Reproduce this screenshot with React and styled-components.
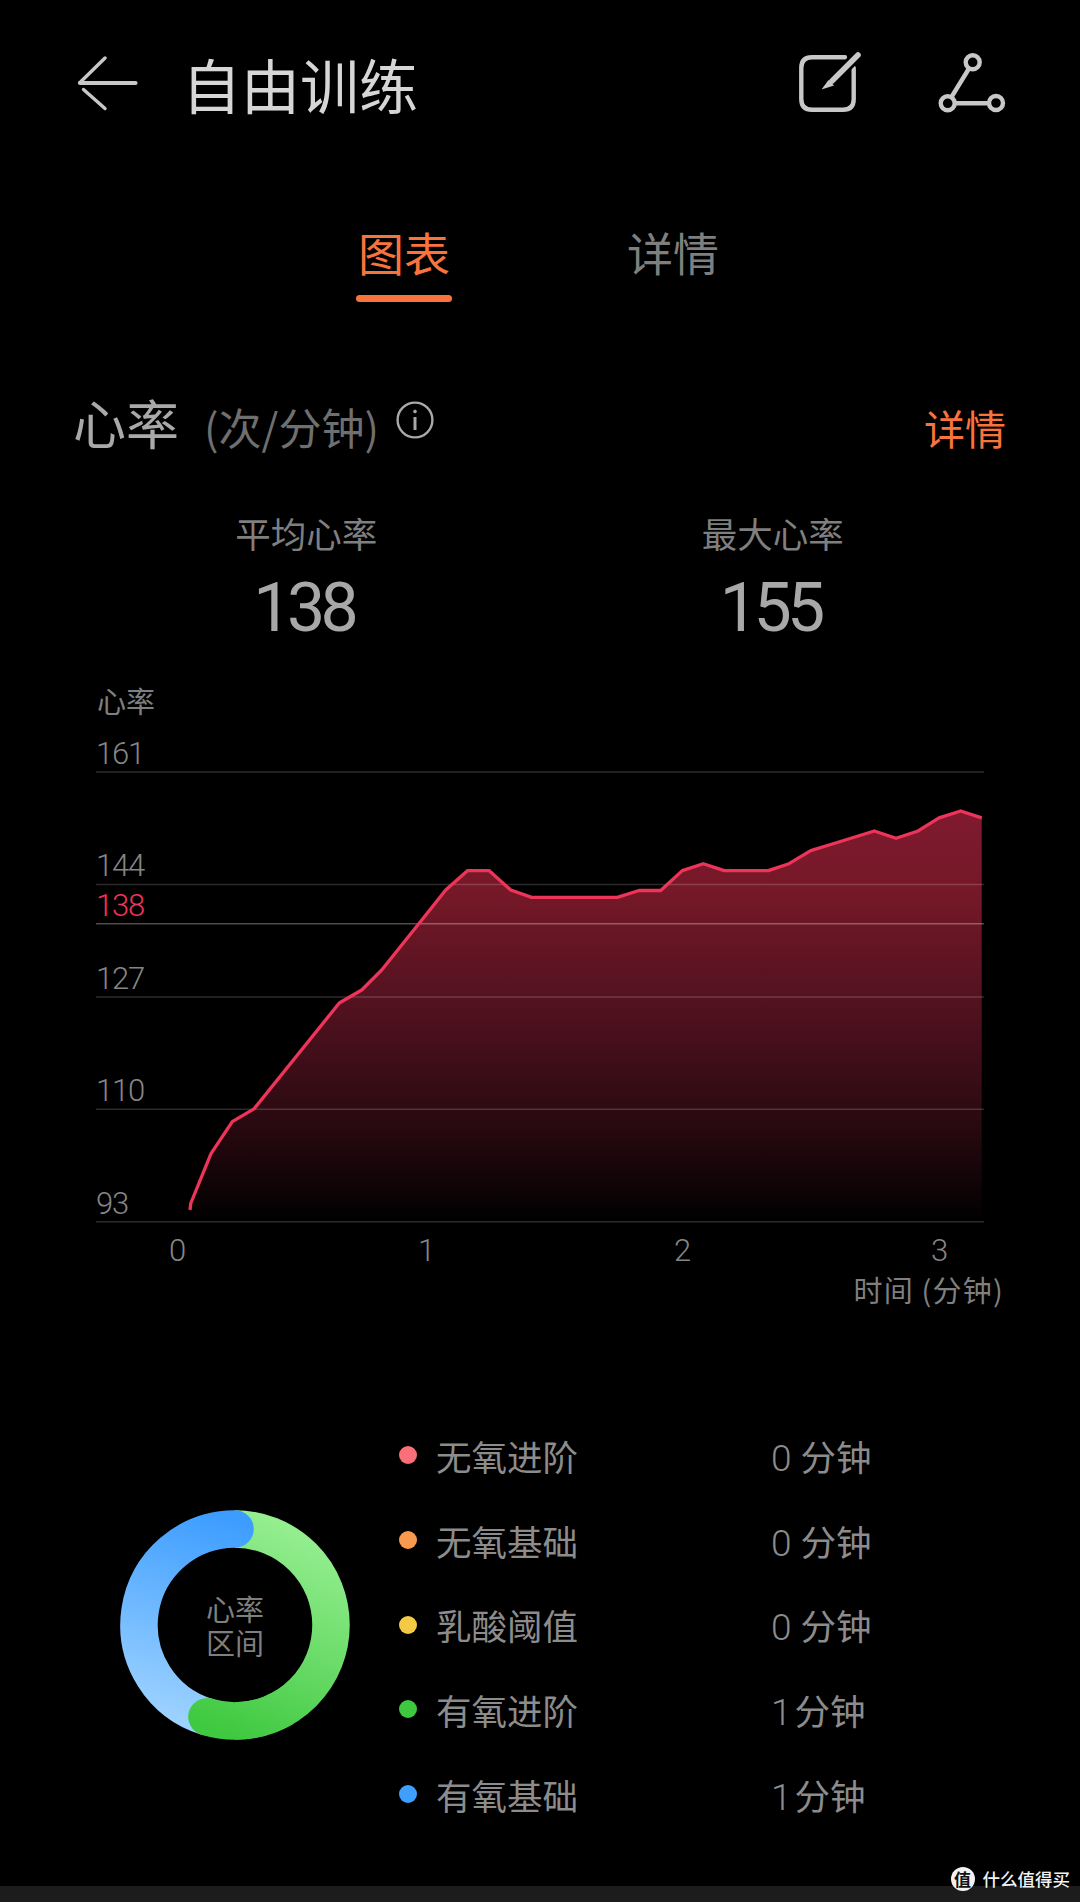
import React from "react";
import styled, { createGlobalStyle } from "styled-components";

const CJK = `"Noto Sans CJK SC", "Noto Sans", sans-serif`;
const NUM = `Roboto, "Noto Sans CJK SC", sans-serif`;

const GlobalStyle = createGlobalStyle`
  html, body {
    margin: 0;
    background: #000;
  }
  * {
    box-sizing: border-box;
  }
`;

const gridLines = [
  { y: 772, label: "161" },
  { y: 884.4, label: "144" },
  { y: 923.8, label: "138", accent: true },
  { y: 996.9, label: "127" },
  { y: 1109.3, label: "110" },
  { y: 1221.7, label: "93" },
];

const xTicks = [
  { x: 177, label: "0" },
  { x: 426, label: "1" },
  { x: 682, label: "2" },
  { x: 939, label: "3" },
];

const heartPoints = [
  [190, 1210], [190.7, 1203.5], [211, 1153.6], [232.3, 1121.6], [254, 1108.9],
  [339.3, 1003], [361.7, 990], [381.7, 970], [425, 916], [445.7, 890],
  [467.7, 870.6], [489, 870.6], [510.7, 890], [531.7, 897.4], [617.3, 897.4],
  [639, 890.5], [660.7, 890.5], [682.3, 870.6], [703.3, 863.7], [724.3, 870.6],
  [768.3, 870.6], [789, 863.7], [810.7, 850.6], [832.3, 844], [853.3, 837.5],
  [874.3, 831], [896, 838.2], [917.3, 831.3], [939, 817.9], [960.7, 811],
  [981.7, 817.9],
];

const zones = [
  { name: "无氧进阶", value: "0", color: "#fb6f78" },
  { name: "无氧基础", value: "0", color: "#f9994d" },
  { name: "乳酸阈值", value: "0", color: "#f4c944" },
  { name: "有氧进阶", value: "1", color: "#3ec83f" },
  { name: "有氧基础", value: "1", color: "#3f9fff" },
];

const linePath = heartPoints.map(([x, y]) => `${x},${y}`).join(" ");
const areaPath = `190,1221 ${linePath} 981.7,1221`;

const polar = (deg) => {
  const a = (deg * Math.PI) / 180;
  return `${115 + 96 * Math.sin(a)} ${115 - 96 * Math.cos(a)}`;
};
const arc = (from, to) => {
  const large = to - from > 180 ? 1 : 0;
  return `M${polar(from)} A96 96 0 ${large} 1 ${polar(to)}`;
};

function BackIcon() {
  return (
    <svg width="62" height="56" viewBox="0 0 62 56" fill="none" stroke="#c8c8c8" strokeLinecap="round">
      <path d="M28 2 L3 26.5" strokeWidth="3.4" />
      <path d="M6.5 33.5 L28 52.5" strokeWidth="3.4" />
      <path d="M3 27 H58.5" strokeWidth="4.2" />
    </svg>
  );
}

function EditIcon() {
  return (
    <svg width="66" height="64" viewBox="0 0 66 64" fill="none">
      <path
        d="M47 5.3 H14 Q3.3 5.3 3.3 16 V47 Q3.3 57.8 14 57.8 H45 Q55.7 57.8 55.7 47 V16"
        stroke="#c8c8c8"
        strokeWidth="4.4"
        strokeLinecap="round"
      />
      <path d="M60 3 L34 29" stroke="#000" strokeWidth="11" />
      <path d="M60 3 L34 29" stroke="#c8c8c8" strokeWidth="5.6" strokeLinecap="round" />
      <path d="M30.5 28 L36 33.5 L23.5 37.5 Z" fill="#c8c8c8" />
    </svg>
  );
}

function ShareIcon() {
  return (
    <svg width="68" height="62" viewBox="0 0 68 62" fill="none" stroke="#c8c8c8" strokeWidth="4.4">
      <circle cx="34.7" cy="9.3" r="7" />
      <circle cx="9.7" cy="50.3" r="7" />
      <circle cx="58" cy="50" r="7" />
      <path d="M31 15.5 L13.5 44 M16.7 50.2 H51" />
    </svg>
  );
}

function InfoIcon() {
  return (
    <svg width="38" height="38" viewBox="0 0 38 38" fill="none" stroke="#a8a8a8">
      <circle cx="19" cy="19" r="17.4" strokeWidth="2.4" />
      <path d="M19 16 V29" strokeWidth="3" />
      <circle cx="19" cy="10.5" r="1.4" fill="#a8a8a8" strokeWidth="1" />
    </svg>
  );
}

function HeartChart() {
  return (
    <ChartSvg viewBox="73 680 934 640">
      <defs>
        <linearGradient id="heartFill" x1="0" y1="811" x2="0" y2="1222" gradientUnits="userSpaceOnUse">
          <stop offset="0" stopColor="#801a2f" />
          <stop offset="0.2" stopColor="#751828" />
          <stop offset="0.5" stopColor="#4e111e" />
          <stop offset="0.8" stopColor="#23080e" />
          <stop offset="1" stopColor="#000" />
        </linearGradient>
      </defs>
      <AxisTitle x="97" y="713">心率</AxisTitle>
      <polygon points={areaPath} fill="url(#heartFill)" />
      {gridLines.map((g) => (
        <g key={g.label}>
          <line
            x1="96"
            x2="984"
            y1={g.y}
            y2={g.y}
            stroke="#fff"
            strokeOpacity={g.accent ? 0.3 : 0.17}
            strokeWidth="1.5"
          />
          <AxisNumber x="96" y={g.y - 8} $accent={g.accent}>
            {g.label}
          </AxisNumber>
        </g>
      ))}
      <polyline
        points={linePath}
        fill="none"
        stroke="#ef3459"
        strokeWidth="3.3"
        strokeLinejoin="round"
      />
      {xTicks.map((t) => (
        <AxisNumber key={t.label} x={t.x} y="1261" textAnchor="middle">
          {t.label}
        </AxisNumber>
      ))}
      <AxisTitle x="1004" y="1302" textAnchor="end" $wide>时间 (分钟)</AxisTitle>
    </ChartSvg>
  );
}

function ZoneRing() {
  return (
    <RingWrap>
      <svg width="230" height="230" viewBox="0 0 230 230" fill="none" strokeWidth="37.5">
        <defs>
          <linearGradient id="ringGreen" x1="170" y1="15" x2="85" y2="215" gradientUnits="userSpaceOnUse">
            <stop offset="0" stopColor="#95ef90" />
            <stop offset="0.5" stopColor="#6cdc6a" />
            <stop offset="1" stopColor="#3fc940" />
          </linearGradient>
          <linearGradient id="ringBlue" x1="130" y1="15" x2="70" y2="215" gradientUnits="userSpaceOnUse">
            <stop offset="0" stopColor="#3d9dff" />
            <stop offset="1" stopColor="#9dd2ff" />
          </linearGradient>
        </defs>
        <path d={arc(0, 180)} stroke="url(#ringGreen)" />
        <path d={arc(197, 360)} stroke="url(#ringBlue)" strokeLinecap="round" />
        <path d={arc(150, 197)} stroke="url(#ringGreen)" strokeLinecap="round" />
      </svg>
      <RingLabel>
        心率
        <br />
        区间
      </RingLabel>
    </RingWrap>
  );
}

export default function App() {
  return (
    <Page>
      <GlobalStyle />
      <Header>
        <BackIcon />
        <Title>自由训练</Title>
        <HeaderActions>
          <EditIcon />
          <ShareIcon />
        </HeaderActions>
      </Header>

      <Tabs>
        <Tab $active>
          图表
          <TabBar />
        </Tab>
        <Tab>详情</Tab>
      </Tabs>

      <SectionHead>
        <SectionName>心率</SectionName>
        <SectionUnit>(次/分钟)</SectionUnit>
        <InfoSlot>
          <InfoIcon />
        </InfoSlot>
        <DetailLink>详情</DetailLink>
      </SectionHead>

      <Stats>
        <Stat>
          <StatLabel>平均心率</StatLabel>
          <StatValue>138</StatValue>
        </Stat>
        <Stat>
          <StatLabel>最大心率</StatLabel>
          <StatValue>155</StatValue>
        </Stat>
      </Stats>

      <HeartChart />

      <Zones>
        <ZoneRing />
        <Legend>
          {zones.map((z) => (
            <LegendRow key={z.name}>
              <Dot $color={z.color} />
              <ZoneName>{z.name}</ZoneName>
              <ZoneValue>
                <ZoneDigit $narrow={z.value === "1"}>{z.value}</ZoneDigit>分钟
              </ZoneValue>
            </LegendRow>
          ))}
        </Legend>
      </Zones>

      <BottomStrip />
      <Watermark>
        <WatermarkBadge>值</WatermarkBadge>
        什么值得买
      </Watermark>
    </Page>
  );
}

const Page = styled.div`
  position: relative;
  width: 1080px;
  height: 1902px;
  overflow: hidden;
  display: flex;
  flex-direction: column;
  background: #000;
  font-family: ${CJK};
`;

const Header = styled.header`
  height: 168px;
  padding: 0 74px 0 77px;
  display: flex;
  align-items: center;
`;

const Title = styled.h1`
  margin: 0 0 0 43px;
  font-size: 59px;
  font-weight: 400;
  line-height: 70px;
  color: #d6d6d6;
`;

const HeaderActions = styled.div`
  margin-left: auto;
  display: flex;
  align-items: center;
  gap: 74px;
`;

const Tabs = styled.nav`
  margin-top: 54px;
  padding-right: 3px;
  display: flex;
  justify-content: center;
  gap: 173px;
`;

const Tab = styled.div`
  width: 96px;
  display: flex;
  flex-direction: column;
  align-items: center;
  font-size: 46px;
  line-height: 58px;
  white-space: nowrap;
  color: ${(p) => (p.$active ? "#f9733c" : "#7f7f7f")};
`;

const TabBar = styled.span`
  width: 96px;
  height: 7px;
  margin-top: 15px;
  border-radius: 4px;
  background: #f9733c;
`;

const SectionHead = styled.div`
  position: relative;
  height: 60px;
  margin-top: 90px;
  padding: 0 74px 0 73px;
  display: flex;
  align-items: baseline;
`;

const SectionName = styled.span`
  font-size: 53px;
  line-height: 60px;
  color: #a9a9a9;
`;

const SectionUnit = styled.span`
  margin-left: 25px;
  font-size: 43px;
  color: #6f6f6f;
`;

const InfoSlot = styled.span`
  margin-left: 17px;
  align-self: flex-start;
  margin-top: 9px;
`;

const DetailLink = styled.span`
  margin-left: auto;
  font-size: 41px;
  color: #f9733c;
`;

const Stats = styled.div`
  margin-top: 59px;
  padding: 0 74px 0 73px;
  display: grid;
  grid-template-columns: 1fr 1fr;
`;

const Stat = styled.div`
  display: flex;
  flex-direction: column;
  align-items: center;
`;

const StatLabel = styled.div`
  font-size: 35.5px;
  line-height: 44px;
  color: #7f7f7f;
`;

const StatValue = styled.div`
  margin-top: 13px;
  padding-right: 5px;
  font-family: ${NUM};
  font-size: 68px;
  font-weight: 400;
  line-height: 80px;
  letter-spacing: -4.5px;
  color: #a8a8a8;
`;

const ChartSvg = styled.svg`
  display: block;
  flex: none;
  width: 934px;
  height: 640px;
  margin: 32px 0 0 73px;
`;

const AxisTitle = styled.text`
  font-family: ${CJK};
  font-size: 29px;
  letter-spacing: ${(p) => (p.$wide ? "1.2px" : "0")};
  fill: #7f7f7f;
`;

const AxisNumber = styled.text`
  font-family: ${NUM};
  font-size: 31px;
  font-weight: 300;
  letter-spacing: -1.2px;
  fill: ${(p) => (p.$accent ? "#ef3459" : "#868686")};
`;

const Zones = styled.section`
  margin-top: 93px;
  padding-left: 120px;
  display: flex;
  align-items: center;
  gap: 49px;
`;

const RingWrap = styled.div`
  position: relative;
  width: 230px;
  height: 230px;
  flex: none;
`;

const RingLabel = styled.div`
  position: absolute;
  inset: 0;
  display: flex;
  align-items: center;
  justify-content: center;
  text-align: center;
  font-size: 29px;
  line-height: 34px;
  color: #7f7f7f;
`;

const Legend = styled.ul`
  margin: 0;
  padding: 0;
  list-style: none;
`;

const LegendRow = styled.li`
  height: 84.7px;
  display: flex;
  align-items: center;
`;

const Dot = styled.span`
  width: 18px;
  height: 18px;
  border-radius: 50%;
  background: ${(p) => p.$color};
`;

const ZoneName = styled.span`
  width: 335px;
  margin-left: 19px;
  font-size: 35.5px;
  color: #8c8c8c;
`;

const ZoneValue = styled.span`
  font-size: 35.5px;
  color: #8c8c8c;
`;

const ZoneDigit = styled.span`
  margin-right: ${(p) => (p.$narrow ? "3px" : "9px")};
  font-family: ${NUM};
  font-size: 37px;
  font-weight: 300;
`;

const BottomStrip = styled.div`
  height: 16px;
  margin-top: auto;
  background: #1c1c1c;
`;

const Watermark = styled.div`
  position: absolute;
  right: 10px;
  bottom: 11px;
  display: flex;
  align-items: center;
  gap: 8px;
  font-size: 17.5px;
  font-weight: 500;
  line-height: 24px;
  color: #f2f2f2;
`;

const WatermarkBadge = styled.span`
  width: 24px;
  height: 24px;
  border-radius: 50%;
  display: flex;
  align-items: center;
  justify-content: center;
  background: #f2f2f2;
  color: #111;
  font-size: 17px;
  font-weight: 700;
`;
